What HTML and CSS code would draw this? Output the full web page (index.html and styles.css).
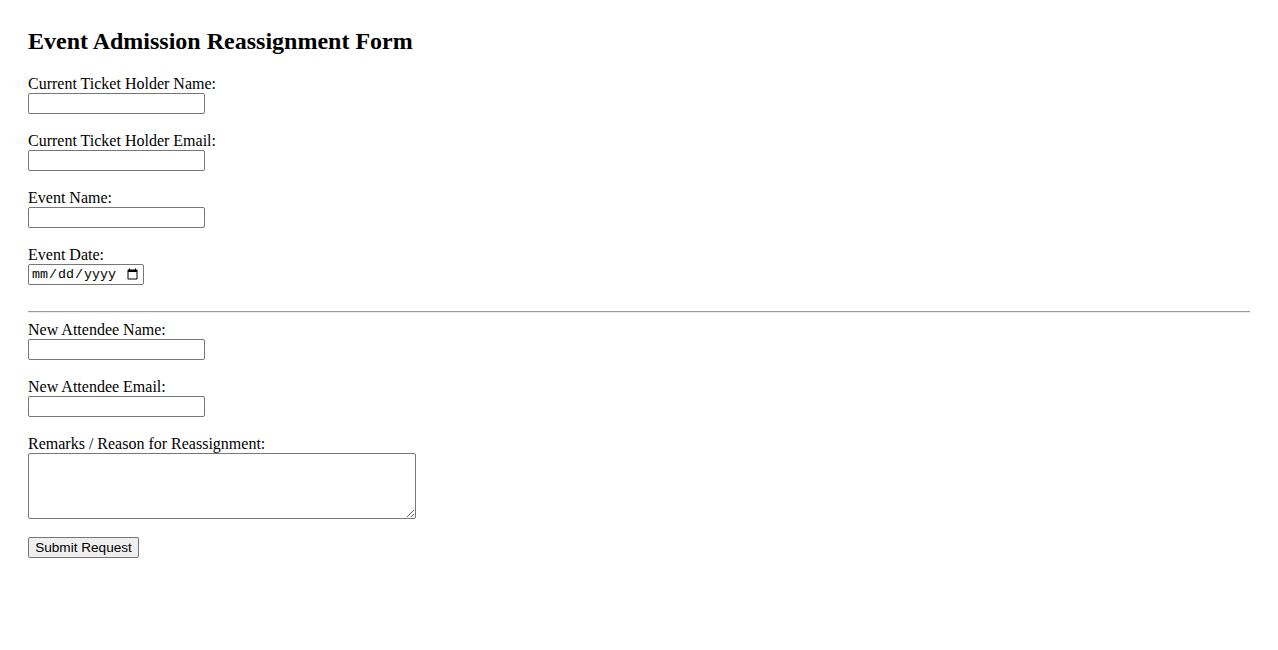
FILE: index.html
```html
<!DOCTYPE html>
<html lang="en">
<head>
<meta charset="utf-8">
<title>Event Admission Reassignment Form</title>
<link rel="stylesheet" href="styles.css">
</head>
<body>
<div class="page">
  <h2 class="title">Event Admission Reassignment Form</h2>
  <form class="form">
    <div class="field">
      <label class="label" for="cur-name">Current Ticket Holder Name:</label>
      <input class="text-input" type="text" id="cur-name">
    </div>
    <div class="field">
      <label class="label" for="cur-email">Current Ticket Holder Email:</label>
      <input class="text-input" type="email" id="cur-email">
    </div>
    <div class="field">
      <label class="label" for="event-name">Event Name:</label>
      <input class="text-input" type="text" id="event-name">
    </div>
    <div class="field">
      <label class="label" for="event-date">Event Date:</label>
      <input class="date-input" type="date" id="event-date">
    </div>
    <hr class="divider">
    <div class="field">
      <label class="label" for="new-name">New Attendee Name:</label>
      <input class="text-input" type="text" id="new-name">
    </div>
    <div class="field">
      <label class="label" for="new-email">New Attendee Email:</label>
      <input class="text-input" type="email" id="new-email">
    </div>
    <div class="field">
      <label class="label" for="remarks">Remarks / Reason for Reassignment:</label>
      <textarea class="textarea" id="remarks"></textarea>
    </div>
    <div class="actions">
      <button class="submit" type="submit">Submit Request</button>
    </div>
  </form>
</div>
</body>
</html>
```
FILE: styles.css
```css
html, body {
  margin: 0;
  padding: 0;
  background: #ffffff;
}

body {
  font-family: "Liberation Serif", "Times New Roman", serif;
  font-size: 16px;
  color: #000000;
}

.page {
  padding: 27px 28px 28px 28px;
}

.title {
  font-size: 24px;
  font-weight: bold;
  margin: 0 0 20px 0;
  line-height: 28px;
}

.form {
  display: flex;
  flex-direction: column;
  align-items: flex-start;
}

.field {
  display: flex;
  flex-direction: column;
  align-items: flex-start;
  margin-bottom: 18px;
}

.label {
  display: block;
  line-height: 18px;
}

.text-input {
  box-sizing: border-box;
  width: 177px;
  height: 21px;
  margin: 0;
  padding: 1px 2px;
  border: 1px solid #767676;
  border-radius: 2px;
  font-family: "Liberation Sans", Arial, sans-serif;
  font-size: 13.333px;
  background: #ffffff;
}

.date-input {
  box-sizing: border-box;
  width: 116px;
  height: 21px;
  margin: 0;
  padding: 1px 2px;
  border: 1px solid #767676;
  border-radius: 2px;
  font-family: "Liberation Mono", "Courier New", monospace;
  font-size: 13.333px;
  background: #ffffff;
  color: #000000;
}

.divider {
  align-self: stretch;
  margin: 8px 0 8px 0;
  border: none;
  border-top: 1px solid #9a9a9a;
  border-bottom: 1px solid #eeeeee;
  height: 0;
}

.textarea {
  box-sizing: border-box;
  width: 388px;
  height: 66px;
  margin: 0;
  padding: 2px;
  border: 1px solid #767676;
  border-radius: 2px;
  font-family: "Liberation Mono", monospace;
  font-size: 13.333px;
  resize: both;
}

.actions {
  display: flex;
}

.submit {
  box-sizing: border-box;
  width: 111px;
  height: 21px;
  margin: 0;
  padding: 1px 6px;
  border: 1px solid #767676;
  border-radius: 2px;
  background: #efefef;
  font-family: "Liberation Sans", Arial, sans-serif;
  font-size: 13.6px;
  color: #000000;
  white-space: nowrap;
}
```
